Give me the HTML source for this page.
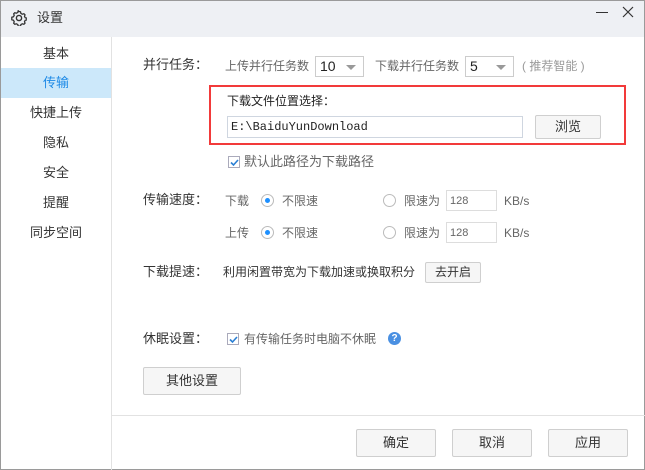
<!DOCTYPE html>
<html><head><meta charset="utf-8"><style>
*{margin:0;padding:0;box-sizing:border-box}
body{width:645px;height:470px;overflow:hidden;background:#fff;font-family:"Liberation Sans","Noto Sans CJK SC",sans-serif;font-size:12px;line-height:14px;color:#333}
.win{position:absolute;left:0;top:0;width:645px;height:470px;border:1px solid #9a9a9a;background:#fff}
.title{position:absolute;left:0;top:0;width:643px;height:36px;background:#eef0f4}
.a{position:absolute;white-space:nowrap}
.side{position:absolute;left:0;top:36px;width:111px;height:433px;border-right:1px solid #e2e2e2}
.si{position:absolute;left:0;width:110px;text-align:center;height:30px;line-height:30px;font-size:13px}
.btn{position:absolute;background:#f6f6f6;border:1px solid #cfcfcf;border-radius:2px;text-align:center;color:#333;font-size:13px}
.inp{position:absolute;border:1px solid #cfd6e0;background:#fff}
.sel{position:absolute;border:1px solid #cccccc;background:#fff;height:21px;line-height:19px;padding-left:4px;font-size:14px;color:#222}
.sel:after{content:"";position:absolute;right:7px;top:8px;border-left:5px solid transparent;border-right:5px solid transparent;border-top:5px solid #999}
.g{color:#666}
.cb{position:absolute;width:12px;height:12px;border:1px solid #aab;background:#fff}
.rd{position:absolute;width:13px;height:13px;border:1px solid #bbb;border-radius:50%;background:#fff}
.rd.on:after{content:"";position:absolute;left:3px;top:3px;width:5px;height:5px;border-radius:50%;background:#1e90ff}
.l{font-size:13px}
</style></head><body><div class="win">
<div class="title">
<svg class="a" style="left:10px;top:9px" width="16" height="16" viewBox="0 0 16 16"><circle cx="8" cy="8" r="2.6" fill="none" stroke="#333" stroke-width="1.4"/><path d="M8 1.5l1.5.3.4 1.6 1.4.8 1.6-.5 1.1 1.1-.5 1.6.8 1.4 1.6.4v1.6l-1.6.4-.8 1.4.5 1.6-1.1 1.1-1.6-.5-1.4.8-.4 1.6H7.2l-.4-1.6-1.4-.8-1.6.5-1.1-1.1.5-1.6-.8-1.4-1.6-.4V7.2l1.6-.4.8-1.4-.5-1.6 1.1-1.1 1.6.5 1.4-.8.4-1.6z" fill="none" stroke="#333" stroke-width="1.3"/></svg>
<span class="a" style="left:36px;top:10px;font-size:13px">设置</span>
<div class="a" style="left:595px;top:11px;width:12px;height:1px;background:#333"></div>
<svg class="a" style="left:621px;top:5px" width="12" height="12" viewBox="0 0 12 12"><path d="M1 1L11 11M11 1L1 11" stroke="#333" stroke-width="1.2"/></svg>
</div>
<div class="side">
<div class="si" style="top:2px">基本</div>
<div class="si" style="top:31px;background:#cce8fa;color:#1e8ae6">传输</div>
<div class="si" style="top:61px">快捷上传</div>
<div class="si" style="top:91px">隐私</div>
<div class="si" style="top:121px">安全</div>
<div class="si" style="top:151px">提醒</div>
<div class="si" style="top:181px">同步空间</div>
</div>
<span class="a l" style="left:142px;top:57px">并行任务：</span>
<span class="a g" style="left:224px;top:58px">上传并行任务数</span>
<div class="sel" style="left:314px;top:55px;width:49px">10</div>
<span class="a g" style="left:374px;top:58px">下载并行任务数</span>
<div class="sel" style="left:464px;top:55px;width:49px">5</div>
<span class="a" style="left:521px;top:58px;color:#999">( 推荐智能 )</span>
<div class="a" style="left:208px;top:84px;width:417px;height:60px;border:2px solid #f23a3a"></div>
<span class="a" style="left:226px;top:93px;color:#222">下载文件位置选择：</span>
<div class="inp" style="left:226px;top:115px;width:296px;height:22px"></div>
<span class="a" style="left:230px;top:119px;font-family:'Liberation Mono',monospace;font-size:12px;color:#222">E:\BaiduYunDownload</span>
<div class="btn" style="left:534px;top:114px;width:66px;height:24px;line-height:22px">浏览</div>
<div class="cb" style="left:227px;top:155px"></div>
<svg class="a" style="left:228px;top:156px" width="11" height="11" viewBox="0 0 11 11"><path d="M2 5.5l2.5 2.5L9 3" fill="none" stroke="#2a7fd4" stroke-width="1.6"/></svg>
<span class="a g" style="left:243px;top:154px;font-size:13px">默认此路径为下载路径</span>
<span class="a l" style="left:142px;top:192px">传输速度：</span>
<span class="a g" style="left:224px;top:193px">下载</span>
<div class="rd on" style="left:260px;top:193px"></div>
<span class="a g" style="left:281px;top:193px">不限速</span>
<div class="rd" style="left:382px;top:193px"></div>
<span class="a g" style="left:403px;top:193px">限速为</span>
<div class="inp" style="left:445px;top:189px;width:51px;height:21px;border-color:#ddd"></div>
<span class="a" style="left:449px;top:193px;font-size:11px;color:#666">128</span>
<span class="a g" style="left:503px;top:193px">KB/s</span>
<span class="a g" style="left:224px;top:225px">上传</span>
<div class="rd on" style="left:260px;top:225px"></div>
<span class="a g" style="left:281px;top:225px">不限速</span>
<div class="rd" style="left:382px;top:225px"></div>
<span class="a g" style="left:403px;top:225px">限速为</span>
<div class="inp" style="left:445px;top:221px;width:51px;height:21px;border-color:#ddd"></div>
<span class="a" style="left:449px;top:225px;font-size:11px;color:#666">128</span>
<span class="a g" style="left:503px;top:225px">KB/s</span>
<span class="a l" style="left:142px;top:264px">下载提速：</span>
<span class="a" style="left:222px;top:264px">利用闲置带宽为下载加速或换取积分</span>
<div class="btn" style="left:424px;top:261px;width:56px;height:21px;line-height:19px;font-size:12px">去开启</div>
<span class="a l" style="left:142px;top:331px">休眠设置：</span>
<div class="cb" style="left:226px;top:332px"></div>
<svg class="a" style="left:227px;top:333px" width="11" height="11" viewBox="0 0 11 11"><path d="M2 5.5l2.5 2.5L9 3" fill="none" stroke="#2a7fd4" stroke-width="1.6"/></svg>
<span class="a g" style="left:243px;top:331px">有传输任务时电脑不休眠</span>
<div class="a" style="left:387px;top:331px;width:13px;height:13px;border-radius:50%;background:#4a90e2;color:#fff;font-size:10px;font-weight:bold;text-align:center;line-height:13px">?</div>
<div class="btn" style="left:142px;top:366px;width:98px;height:28px;line-height:26px">其他设置</div>
<div class="a" style="left:111px;top:414px;width:533px;height:1px;background:#e2e2e2"></div>
<div class="btn" style="left:355px;top:428px;width:80px;height:28px;line-height:26px">确定</div>
<div class="btn" style="left:451px;top:428px;width:80px;height:28px;line-height:26px">取消</div>
<div class="btn" style="left:547px;top:428px;width:80px;height:28px;line-height:26px">应用</div>
</div></body></html>
